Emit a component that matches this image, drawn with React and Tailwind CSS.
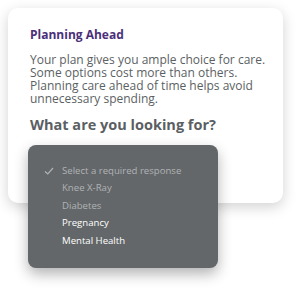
export default function App() {
  return (
    <div className="w-[305px] h-[290px] bg-white relative overflow-hidden" style={{ fontFamily: "'Open Sans', sans-serif" }}>
      <div className="absolute left-[8px] top-[8px] w-[275px] h-[195px] bg-white rounded-[10px] shadow-[0_4px_14px_rgba(0,0,0,0.18)] pl-[22px] pt-[19px]">
        <div className="text-[12px] font-bold text-[#4b2f7a] leading-[16px]">Planning Ahead</div>
        <p className="mt-[10px] text-[12px] leading-[13px] font-medium text-[#5b5f63] whitespace-nowrap">
          Your plan gives you ample choice for care.<br />
          Some options cost more than others.<br />
          Planning care ahead of time helps avoid<br />
          unnecessary spending.
        </p>
        <div className="mt-[10px] text-[14.5px] font-bold text-[#5b5f63] leading-[20px] whitespace-nowrap">What are you looking for?</div>
      </div>
      <div className="absolute left-[28px] top-[145px] w-[190px] h-[123px] bg-[#636769] rounded-[8px] shadow-[0_6px_14px_rgba(0,0,0,0.3)] pt-[17px] text-[9.6px] font-medium">
        <div className="flex flex-col">
          <div className="flex items-center h-[17.5px]">
            <svg className="ml-[16px] w-[10px] h-[10px]" viewBox="0 0 10 10" fill="none" stroke="#b0b3b5" strokeWidth="1.2"><path d="M1 5.5 L3.8 8 L9 2" /></svg>
            <span className="ml-[8px] text-[#b0b3b5]">Select a required response</span>
          </div>
          <div className="h-[17.5px] flex items-center pl-[34px] text-[#b0b3b5]">Knee X-Ray</div>
          <div className="h-[17.5px] flex items-center pl-[34px] text-[#b0b3b5]">Diabetes</div>
          <div className="h-[17.5px] flex items-center pl-[34px] text-white">Pregnancy</div>
          <div className="h-[17.5px] flex items-center pl-[34px] text-white">Mental Health</div>
        </div>
      </div>
    </div>
  );
}
